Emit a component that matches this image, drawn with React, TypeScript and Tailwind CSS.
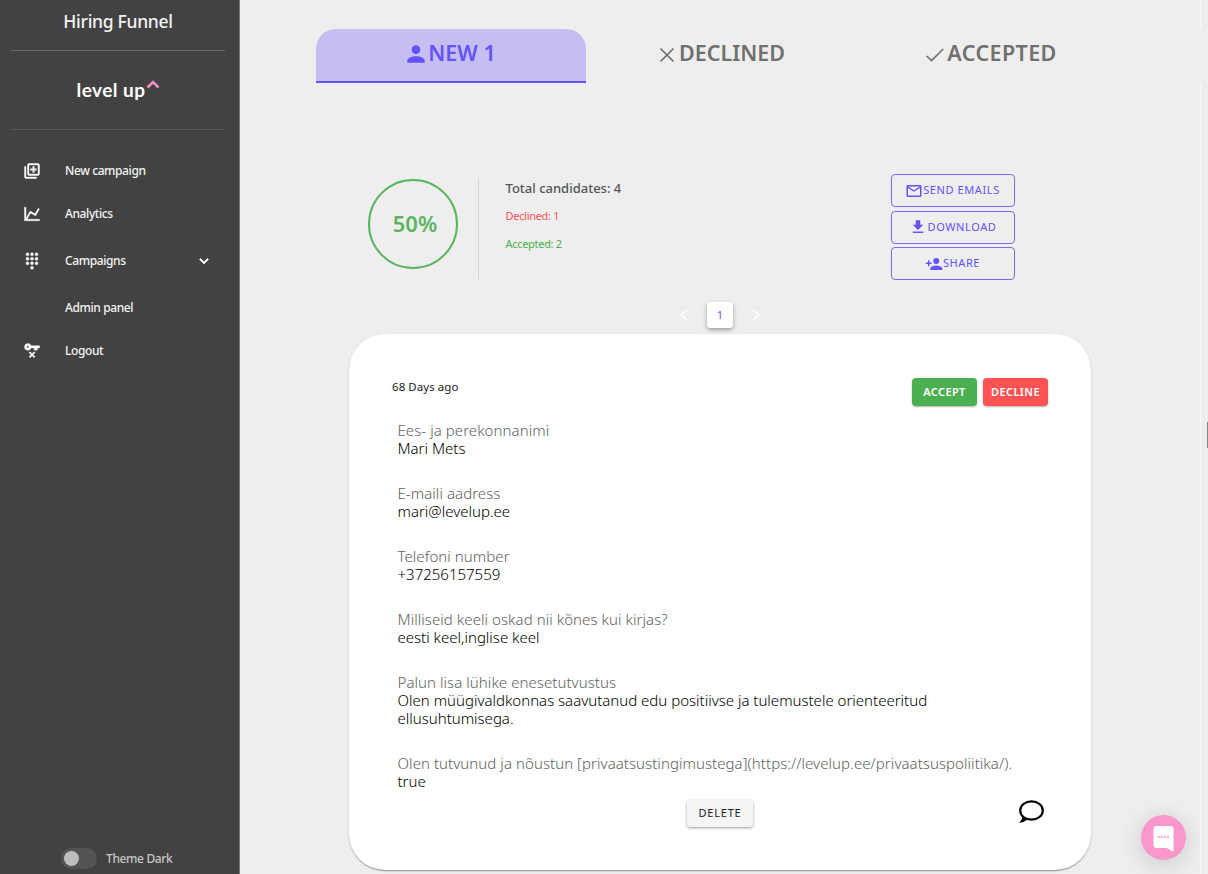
import React from 'react';

type IconProps = { d: string; className?: string };

const Icon = ({ d, className = '' }: IconProps) => (
  <svg viewBox="0 0 24 24" fill="currentColor" className={`shrink-0 ${className}`}>
    <path d={d} />
  </svg>
);

const ICONS = {
  campaign:
    'M18 11H15V14H13V11H10V9H13V6H15V9H18M20 4V16H8V4H20M20 2H8C6.9 2 6 2.9 6 4V16C6 17.11 6.9 18 8 18H20C21.11 18 22 17.11 22 16V4C22 2.9 21.11 2 20 2M4 6H2V20C2 21.11 2.9 22 4 22H18V20H4V6Z',
  chart:
    'M16,11.78L20.24,4.45L21.97,5.45L16.74,14.5L10.23,10.75L5.46,19H22V21H2V3H4V17.54L9.5,8L16,11.78Z',
  dialpad:
    'M12,19A2,2 0 1,0 12,23A2,2 0 1,0 12,19M6,1A2,2 0 1,0 6,5A2,2 0 1,0 6,1M6,7A2,2 0 1,0 6,11A2,2 0 1,0 6,7M6,13A2,2 0 1,0 6,17A2,2 0 1,0 6,13M18,1A2,2 0 1,0 18,5A2,2 0 1,0 18,1M12,13A2,2 0 1,0 12,17A2,2 0 1,0 12,13M18,13A2,2 0 1,0 18,17A2,2 0 1,0 18,13M18,7A2,2 0 1,0 18,11A2,2 0 1,0 18,7M12,7A2,2 0 1,0 12,11A2,2 0 1,0 12,7M12,1A2,2 0 1,0 12,5A2,2 0 1,0 12,1Z',
  key:
    'M6.5 2A4.5 4.5 0 1 0 10.74 8H15V11H19V8H22V5H10.74A4.5 4.5 0 0 0 6.5 2M6.5 5A1.5 1.5 0 1 1 6.5 8A1.5 1.5 0 1 1 6.5 5M9.5 13L8.1 14.4L10.7 17L8.1 19.6L9.5 21L12.1 18.4L14.7 21L16.1 19.6L13.5 17L16.1 14.4L14.7 13L12.1 15.6Z',
  account:
    'M12,4A4,4 0 0,1 16,8A4,4 0 0,1 12,12A4,4 0 0,1 8,8A4,4 0 0,1 12,4M12,14C16.42,14 20,15.79 20,18V20H4V18C4,15.79 7.58,14 12,14Z',
  accountPlus:
    'M15,14C12.33,14 7,15.33 7,18V20H23V18C23,15.33 17.67,14 15,14M6,10V7H4V10H1V12H4V15H6V12H9V10M15,12A4,4 0 0,0 19,8A4,4 0 0,0 15,4A4,4 0 0,0 11,8A4,4 0 0,0 15,12Z',
  email:
    'M22 6C22 4.9 21.1 4 20 4H4C2.9 4 2 4.9 2 6V18C2 19.1 2.9 20 4 20H20C21.1 20 22 19.1 22 18V6M20 6L12 11L4 6H20M20 18H4V8L12 13L20 8V18Z',
  download: 'M5,20H19V18H5M19,9H15V3H9V9H5L12,16L19,9Z',
  down: 'M7.41,8.58L12,13.17L16.59,8.58L18,10L12,16L6,10L7.41,8.58Z',
  left: 'M15.41,16.58L10.83,12L15.41,7.41L14,6L8,12L14,18L15.41,16.58Z',
  right: 'M8.59,16.58L13.17,12L8.59,7.41L10,6L16,12L10,18L8.59,16.58Z',
};

type NavProps = { icon?: string; label: string; className: string; chevron?: boolean };

const NavItem = ({ icon, label, className, chevron }: NavProps) => (
  <div className={`flex items-center pl-[23px] pr-[27px] text-white ${className}`}>
    <div className="w-[42px]">
      {icon && <Icon d={icon} className="size-[18px] stroke-current stroke-[0.5]" />}
    </div>
    <span className="flex-1 text-[12px] font-medium tracking-[-0.4px] text-[#f4f4f4]">{label}</span>
    {chevron && <Icon d={ICONS.down} className="mr-[-1px] size-[18px] stroke-current stroke-[0.8]" />}
  </div>
);

const Sidebar = () => (
  <aside className="flex w-[240px] shrink-0 flex-col border-r border-[#787878] bg-[#424242]">
    <div className="mr-[14px] ml-[11px] flex h-[51px] items-start justify-center border-b border-[#686868] pt-[7px] text-[17.500px] leading-[28px] font-medium tracking-[-0.3px] text-[#f4f4f4]">
      Hiring Funnel
    </div>
    <div className="mr-[14px] ml-[11px] flex h-[79px] items-center justify-center border-b border-[#5a5a5a]">
      <span className="font-['Lato','Liberation_Sans',sans-serif] text-[19px] font-bold tracking-[0.45px] text-white">
        level up
      </span>
      <svg viewBox="0 0 14 9" className="mr-[-1px] mb-[12px] ml-px h-[9px] w-[14px]">
        <path d="M1.500 7.500 7 2l5.500 5.500" fill="none" stroke="#f78fc4" strokeWidth="2.600" />
      </svg>
    </div>
    <nav className="flex flex-1 flex-col pt-[19px]">
      <NavItem icon={ICONS.campaign} label="New campaign" className="h-[43px]" />
      <NavItem icon={ICONS.chart} label="Analytics" className="h-[44px]" />
      <NavItem icon={ICONS.dialpad} label="Campaigns" className="h-[50px]" chevron />
      <NavItem label="Admin panel" className="h-[43px]" />
      <NavItem icon={ICONS.key} label="Logout" className="h-[44px]" />
    </nav>
    <div className="flex h-[32px] items-center pl-[61px]">
      <div className="flex h-[21px] w-[36px] items-center rounded-full bg-[#545454] pl-[3px]">
        <div className="size-[15px] rounded-full bg-[#bdbdbd]" />
      </div>
      <span className="mt-px ml-[9px] text-[12px] font-medium tracking-[-0.35px] text-[#c6c6c6]">
        Theme Dark
      </span>
    </div>
  </aside>
);

const Tabs = () => (
  <div className="ml-px flex h-[54px] w-[810px] text-[21.500px] font-semibold text-[#707070]">
    <div className="flex w-[270px] justify-center rounded-t-[20px] border-b-2 border-[#6552ff] bg-[#c4bff0] pr-[2px] pb-[4px] text-[#6552ff]">
      <div className="flex items-center">
        <Icon d={ICONS.account} className="mt-[2px] mr-[-1px] size-[26px]" />
        <span>NEW 1</span>
      </div>
    </div>
    <div className="flex w-[270px] items-center justify-center pb-[6px] pl-[3px]">
      <svg viewBox="0 0 16 16" className="mt-[3px] mr-[4px] size-[16px]">
        <path
          d="M1.500 1.500 14.500 14.500M14.500 1.500 1.500 14.500"
          fill="none"
          stroke="currentColor"
          strokeWidth="1.700"
        />
      </svg>
      <span>DECLINED</span>
    </div>
    <div className="flex w-[270px] items-center justify-center pb-[6px] pl-[2px]">
      <svg viewBox="0 0 18 14" className="mt-[4px] mr-[3px] h-[14px] w-[18px]">
        <path d="M.7 8 5.500 12.500 17.300 1" fill="none" stroke="currentColor" strokeWidth="1.700" />
      </svg>
      <span className="tracking-[0.4px]">ACCEPTED</span>
    </div>
  </div>
);

const outlined =
  'flex h-[33px] items-center justify-center rounded-[4px] border border-[#7b6bfa] text-[11px] tracking-[0.6px] text-[#6552ff]';

const Stats = () => (
  <div className="mt-[91px] mr-[58px] flex h-[106px] w-[647px] items-start">
    <div className="mt-[5px] flex size-[90px] items-center justify-center rounded-full border-2 border-[#5bb55f] pb-px pl-[5px] text-[22px] font-semibold text-[#5bb55f]">
      50%
    </div>
    <div className="mt-[5px] ml-[20px] h-[100px] w-px bg-[#d4d4d4]" />
    <div className="ml-[27px] flex flex-1 flex-col text-[11px] tracking-[-0.3px]">
      <span className="h-[28px] text-[13px] leading-[28px] font-medium tracking-normal text-[#555]">
        Total candidates: 4
      </span>
      <span className="h-[28px] leading-[28px] text-[#ff5252]">Declined: 1</span>
      <span className="h-[28px] leading-[28px] text-[#4caf50]">Accepted: 2</span>
    </div>
    <div className="flex w-[124px] flex-col gap-[3.500px]">
      <div className={outlined}>
        <Icon d={ICONS.email} className="size-[18px]" />
        SEND EMAILS
      </div>
      <div className={outlined}>
        <Icon d={ICONS.download} className="mr-[1px] size-[18px]" />
        DOWNLOAD
      </div>
      <div className={outlined}>
        <Icon d={ICONS.accountPlus} className="size-[18px]" />
        SHARE
      </div>
    </div>
  </div>
);

const FIELDS: { label: string; value: string }[] = [
  { label: 'Ees- ja perekonnanimi', value: 'Mari Mets' },
  { label: 'E-maili aadress', value: 'mari@levelup.ee' },
  { label: 'Telefoni number', value: '+37256157559' },
  { label: 'Milliseid keeli oskad nii kõnes kui kirjas?', value: 'eesti keel,inglise keel' },
  {
    label: 'Palun lisa lühike enesetutvustus',
    value: 'Olen müügivaldkonnas saavutanud edu positiivse ja tulemustele orienteeritud ellusuhtumisega.',
  },
  {
    label: 'Olen tutvunud ja nõustun [privaatsustingimustega](https://levelup.ee/privaatsuspoliitika/).',
    value: 'true',
  },
];

const Card = () => (
  <section className="mt-[6px] flex h-[536px] w-[742px] shrink-0 flex-col rounded-[36px] bg-white pr-[43px] pl-[43px] shadow-[0_2px_1px_-1px_rgba(0,0,0,0.2),0_1px_1px_rgba(0,0,0,0.14),0_1px_3px_rgba(0,0,0,0.12)]">
    <div className="flex items-start justify-between pt-[44px]">
      <span className="text-[11.500px] leading-[18px] tracking-[0.05px] text-[#222]">68 Days ago</span>
      <div className="flex gap-[6px] text-[11px] font-semibold tracking-[0.4px] text-white">
        <div className="flex h-[28px] w-[65px] items-center justify-center rounded-[4px] bg-[#4caf50] shadow-[0_1px_2px_rgba(0,0,0,0.3)]">
          ACCEPT
        </div>
        <div className="flex h-[28px] w-[65px] items-center justify-center rounded-[4px] bg-[#ff5252] shadow-[0_1px_2px_rgba(0,0,0,0.3)]">
          DECLINE
        </div>
      </div>
    </div>
    <div className="mt-[15px] ml-[5.500px] flex flex-col gap-[27px] text-[15px] leading-[18px]">
      {FIELDS.map((f) => (
        <div key={f.label}>
          <div className="font-light tracking-[0.06px] whitespace-nowrap text-[#606060]">{f.label}</div>
          <div className="w-[580px] font-[350] text-black">{f.value}</div>
        </div>
      ))}
    </div>
    <div className="mt-[9px] flex items-start">
      <div className="mt-px ml-[295px] flex h-[27px] w-[66px] items-center justify-center rounded-[3px] bg-[#f5f5f5] text-[11px] tracking-[0.8px] text-[#222] shadow-[0_1px_3px_rgba(0,0,0,0.4)]">
        DELETE
      </div>
      <svg viewBox="0 0 26 24" className="mt-[1px] ml-[265px] h-[24px] w-[26px]">
        <ellipse cx="13.500" cy="10.500" rx="11.300" ry="9.200" fill="none" stroke="#000" strokeWidth="2.200" />
        <path d="M4 16Q4.500 20 1 22.800Q6.500 22.500 9.500 19Z" fill="#000" />
      </svg>
    </div>
  </section>
);

export default function App() {
  return (
    <div className="relative flex h-[874px] w-[1208px] overflow-hidden bg-[#eeeeee] font-['Noto_Sans','Open_Sans',sans-serif]">
      <Sidebar />
      <main className="flex w-[960px] shrink-0 flex-col items-center pt-[29px]">
        <Tabs />
        <Stats />
        <div className="mt-[22px] flex h-[26px] items-center">
          <Icon d={ICONS.left} className="size-[22px] stroke-current stroke-[0.6] text-[#fafafa]" />
          <div className="mx-[12px] flex size-[26px] items-center justify-center rounded-[3px] bg-white text-[11px] text-[#6552ff] shadow-[0_2px_4px_rgba(0,0,0,0.35)]">
            1
          </div>
          <Icon d={ICONS.right} className="size-[22px] stroke-current stroke-[0.6] text-[#fafafa]" />
        </div>
        <Card />
      </main>
      <div className="flex flex-1 flex-col">
        <div className="h-[29px] w-px bg-[#f9f9f9]" />
        <div className="mt-[54px] w-px flex-1 bg-[#f9f9f9]" />
      </div>
      <div className="absolute top-[422px] right-0 h-[26px] w-px bg-[#888]" />
      <div className="absolute top-[815px] left-[1141px] flex size-[45px] items-center justify-center rounded-full bg-[#fb98cb] shadow-[0_4px_24px_rgba(0,0,0,0.16)]">
        <svg viewBox="0 0 21 26" className="mt-[2px] h-[26px] w-[21px]">
          <path
            d="M3.500 0H17.500Q20.500 0 20.500 3V25.500L13.500 22H3.500Q.5 22 .5 19V3Q.5 0 3.500 0Z"
            fill="#fff"
          />
          <path d="M4.500 11H16.500" stroke="#fb98cb" strokeWidth="1.300" strokeDasharray="2.200 1" />
        </svg>
      </div>
    </div>
  );
}
